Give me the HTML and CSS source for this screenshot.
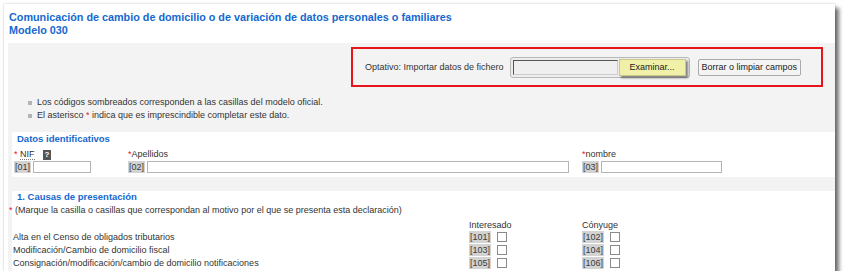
FILE: index.html
```html
<!DOCTYPE html>
<html lang="es">
<head>
<meta charset="UTF-8">
<title>Modelo 030</title>
<link rel="stylesheet" href="styles.css">
</head>
<body>

<div class="sheet">
    <h1 class="title">Comunicación de cambio de domicilio o de variación de datos personales o familiares<br>Modelo 030</h1>

    <div class="panel">
        <div class="import-row">
            <div class="import-box">
                <span class="import-label">Optativo: Importar datos de fichero</span>
                <div class="file-input">
                    <span class="file-field"></span>
                    <button type="button" class="btn-browse">Examinar...</button>
                </div>
                <button type="button" class="btn-clear">Borrar o limpiar campos</button>
            </div>
        </div>

        <ul class="notes">
            <li>Los códigos sombreados corresponden a las casillas del modelo oficial.</li>
            <li>El asterisco <span class="req">*</span> indica que es imprescindible completar este dato.</li>
        </ul>

        <div class="section section-id">
            <h2 class="section-title">Datos identificativos</h2>
            <div class="id-grid">
                <div class="field">
                    <div class="field-label"><span class="req">*</span> <span class="abbr">NIF</span> <span class="help">?</span></div>
                    <div class="field-input"><span class="code">[01]</span><input type="text" class="in-nif"></div>
                </div>
                <div class="field">
                    <div class="field-label"><span class="req">*</span>Apellidos</div>
                    <div class="field-input"><span class="code">[02]</span><input type="text" class="in-apellidos"></div>
                </div>
                <div class="field">
                    <div class="field-label"><span class="req">*</span>nombre</div>
                    <div class="field-input"><span class="code">[03]</span><input type="text" class="in-nombre"></div>
                </div>
            </div>
        </div>

        <div class="section section-causas">
            <h2 class="section-title">1. Causas de presentación</h2>
            <p class="hint"><span class="req">*</span> (Marque la casilla o casillas que correspondan al motivo por el que se presenta esta declaración)</p>
            <div class="causas-grid">
                <span></span><span class="col-head">Interesado</span><span class="col-head">Cónyuge</span>

                <span>Alta en el Censo de obligados tributarios</span>
                <span class="check"><span class="code">[101]</span><span class="box"></span></span>
                <span class="check"><span class="code">[102]</span><span class="box"></span></span>

                <span>Modificación/Cambio de domicilio fiscal</span>
                <span class="check"><span class="code">[103]</span><span class="box"></span></span>
                <span class="check"><span class="code">[104]</span><span class="box"></span></span>

                <span>Consignación/modificación/cambio de domicilio notificaciones</span>
                <span class="check"><span class="code">[105]</span><span class="box"></span></span>
                <span class="check"><span class="code">[106]</span><span class="box"></span></span>
            </div>
        </div>
    </div>
</div>

</body>
</html>
```

FILE: styles.css
```css
body {
    margin: 0;
    background-color: #FFFFFF;
    font-family: "Liberation Sans", Arial, sans-serif;
    font-size: 9px;
    color: #333333;
}
.sheet {
    margin: 4px 0 0 4px;
    width: 831px;
    height: 267px;
    overflow: hidden;
    background-color: #FFFFFF;
    box-shadow: 0 0 2px rgba(0, 0, 0, 0.25), 4px 4px 4px rgba(0, 0, 0, 0.55);
}
.title {
    margin: 0;
    padding: 7px 5px 0 5px;
    height: 32px;
    font-size: 10.8px;
    line-height: 13px;
    font-weight: bold;
    color: #1468d0;
}
.panel {
    margin-left: 4px;
    background-color: #F3F3F3;
    padding-top: 4px;
    height: 230px;
}
.import-row {
    display: flex;
    justify-content: flex-end;
    padding-right: 12px;
}
.import-box {
    display: flex;
    align-items: center;
    width: 456px;
    height: 36px;
    border: 2px solid #E8141B;
    padding-left: 12px;
    box-sizing: content-box;
}
.import-label {
    margin-right: 6px;
}
.file-input {
    display: flex;
    align-items: center;
    width: 174px;
    height: 19px;
    border: 1px solid #B8B8B8;
    border-radius: 3px;
    padding: 0 2px;
    background-color: #EDEDED;
    margin-right: 8px;
}
.file-field {
    width: 103px;
    height: 13px;
    border: 1px solid #555555;
    border-right-color: #CCCCCC;
    border-bottom-color: #CCCCCC;
    background-color: #EFEFEF;
}
.btn-browse {
    width: 67px;
    height: 17px;
    margin-left: 1px;
    border: 1px solid #C9C98A;
    background-color: #F0F0A8;
    font-family: inherit;
    font-size: 9px;
    color: #222222;
    padding: 0;
    box-shadow: 2px 2px 2px rgba(0, 0, 0, 0.45);
}
.btn-clear {
    height: 17px;
    padding: 0 3px;
    border: 1px solid #AAAAAA;
    border-radius: 2px;
    background-color: #F4F4F4;
    font-family: inherit;
    font-size: 9px;
    color: #222222;
}
.notes {
    list-style: none;
    margin: 9px 0 0 0;
    padding: 0 0 0 20px;
}
.notes li {
    line-height: 13px;
    padding-left: 9px;
    position: relative;
}
.notes li::before {
    content: "";
    position: absolute;
    left: 0;
    top: 5px;
    width: 4px;
    height: 4px;
    background-color: #B4B4B4;
}
.req {
    color: #E8141B;
}
.section {
    margin: 10px 0 0 4px;
    background-color: #FFFFFF;
}
.section-title {
    margin: 0;
    font-size: 9.5px;
    font-weight: bold;
    color: #1468d0;
    line-height: 12px;
    padding-left: 5px;
}
.section-id {
    height: 44px;
    padding-top: 1px;
}
.id-grid {
    display: grid;
    grid-template-columns: 114px 454px auto;
    padding-left: 2px;
    margin-top: 2px;
}
.field-label {
    height: 14px;
    line-height: 14px;
}
.abbr {
    border-bottom: 1px dotted #777777;
}
.help {
    display: inline-block;
    width: 8px;
    height: 10px;
    line-height: 10px;
    margin-left: 6px;
    background-color: #555555;
    color: #FFFFFF;
    font-weight: bold;
    text-align: center;
    font-size: 8px;
}
.field-input {
    display: flex;
    align-items: center;
    gap: 2px;
}
.code {
    display: inline-block;
    background-color: #D3D3D3;
    color: #3A3A3A;
    padding: 0 1px;
    line-height: 12px;
}
.field-input input {
    height: 12px;
    box-sizing: border-box;
    border: 1px solid #B4B4B4;
    padding: 0;
    margin: 0;
}
.in-nif {
    width: 58px;
}
.in-apellidos {
    width: 422px;
}
.in-nombre {
    width: 121px;
}
.section-causas {
    margin-top: 14px;
    padding-top: 0;
    height: 90px;
}
.hint {
    margin: 0 0 0 -3px;
    line-height: 14px;
}
.causas-grid {
    display: grid;
    grid-template-columns: 456px 113px auto;
    grid-auto-rows: 13px;
    align-items: center;
    padding-left: 1px;
    margin-top: 0;
}
.col-head {
    align-self: end;
}
.check {
    display: flex;
    align-items: center;
    gap: 6px;
}
.box {
    width: 8px;
    height: 8px;
    border: 1px solid #8A8A8A;
    background-color: #FFFFFF;
}
```
